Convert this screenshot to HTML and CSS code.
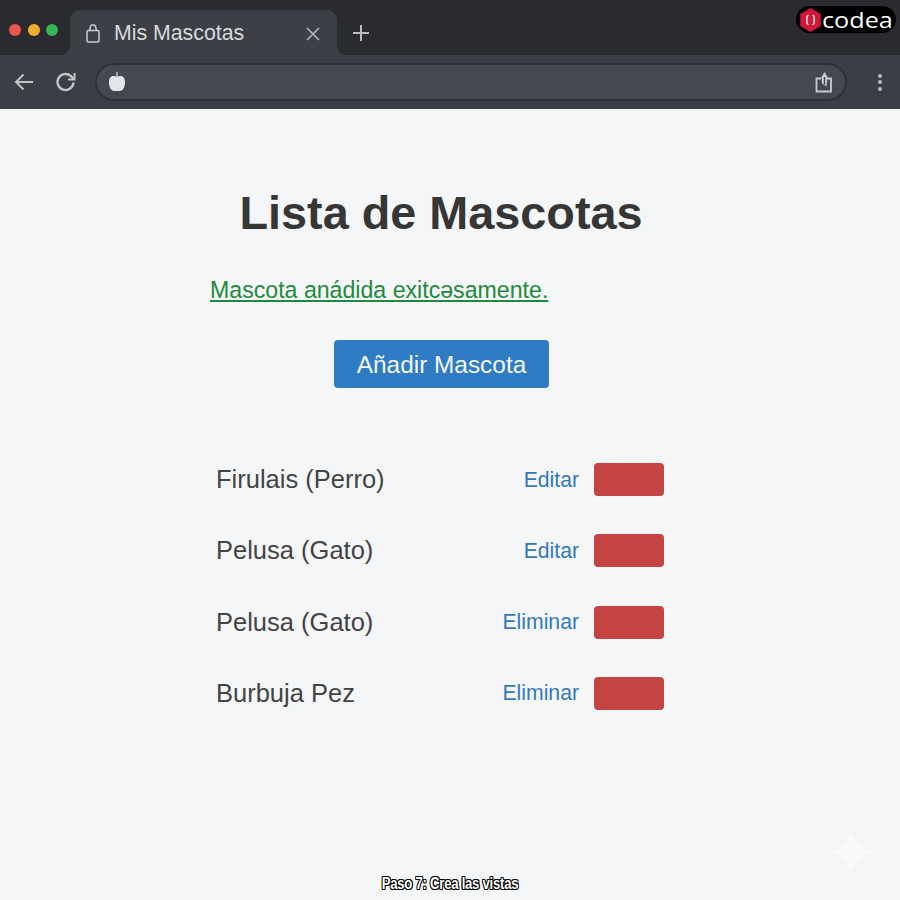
FILE: index.html
```html
<!DOCTYPE html>
<html lang="es">
<head>
  <meta charset="UTF-8">
  <title>Mis Mascotas</title>
  <link rel="stylesheet" href="styles.css">
</head>
<body>

<header class="browser">
  <div class="tab-strip">
    <div class="dots">
      <span class="dot dot-red"></span>
      <span class="dot dot-yellow"></span>
      <span class="dot dot-green"></span>
    </div>
    <div class="tab">
      <svg class="tab-lock" width="14" height="19" viewBox="0 0 14 19" fill="none" stroke="#c9cbce" stroke-width="1.5">
        <rect x="1" y="6.500" width="12" height="11.500" rx="1.500"/>
        <path d="M3.500 6.500L4.500 2.500Q4.800 1 6 1h2q1.200 0 1.500 1.500l1 4"/>
      </svg>
      <span class="tab-title">Mis Mascotas</span>
      <svg class="tab-close" width="14" height="14" viewBox="0 0 14 14" stroke="#b4b6ba" stroke-width="1.6">
        <path d="M1 1l12 12M13 1L1 13"/>
      </svg>
    </div>
    <svg class="new-tab" width="18" height="18" viewBox="0 0 18 18" stroke="#b9bbbe" stroke-width="2">
      <path d="M9 1v16M1 9h16"/>
    </svg>
  </div>
  <div class="toolbar">
    <svg class="nav-icon" width="20" height="20" viewBox="0 0 20 20" fill="none" stroke="#c4c6c9" stroke-width="1.9">
      <path d="M19 10H2M9.500 2.500L2 10l7.500 7.500"/>
    </svg>
    <svg class="nav-icon reload" width="22" height="22" viewBox="0 0 22 22" fill="none" stroke="#c4c6c9" stroke-width="2.300">
      <path d="M18.500 11.500a8 8 0 1 1-2.600-6.400L19 8"/>
      <path d="M19.500 2v6.500H13" stroke-width="2"/>
    </svg>
    <div class="address">
      <svg width="18" height="20" viewBox="0 0 18 20">
        <path d="M8 0h2v5H8z" fill="#9ea1a6"/>
        <path d="M5.500 4c1.500 0 2.200.5 3.500.5s2-.5 3.500-.5c3 0 4.500 2.500 4.500 6.500 0 5-2.500 8.500-5.500 8.500h-5C3.500 19 1 15.500 1 10.500 1 6.500 2.500 4 5.500 4z" fill="#e3e5e8"/>
      </svg>
      <svg class="share" width="20" height="22" viewBox="0 0 20 22" fill="none" stroke="#c9cbce" stroke-width="1.800">
        <path d="M7 7.500H2.500v13h14.500v-13h-4"/>
        <path d="M10.500 1l3 5-1 9.500-4.500-3-.5-6.500z" fill="#c9cbce" stroke="none"/>
        <path d="M10.500 6v7.500" stroke="#3d4047" stroke-width="1.300"/>
      </svg>
    </div>
    <div class="menu-dots">
      <span></span><span></span><span></span>
    </div>
  </div>
</header>

<main class="page">
  <h1>Lista de Mascotas</h1>
  <p class="flash">Mascota anádida exitcəsamente.</p>
  <a class="add-btn" href="#">Añadir Mascota</a>

  <ul class="pet-list">
    <li class="pet">
      <span class="pet-name">Firulais (Perro)</span>
      <a class="pet-link" href="#">Editar</a>
      <button class="del-btn" aria-label="Eliminar"></button>
    </li>
    <li class="pet">
      <span class="pet-name">Pelusa (Gato)</span>
      <a class="pet-link" href="#">Editar</a>
      <button class="del-btn" aria-label="Eliminar"></button>
    </li>
    <li class="pet">
      <span class="pet-name">Pelusa (Gato)</span>
      <a class="pet-link" href="#">Eliminar</a>
      <button class="del-btn" aria-label="Eliminar"></button>
    </li>
    <li class="pet">
      <span class="pet-name">Burbuja Pez</span>
      <a class="pet-link" href="#">Eliminar</a>
      <button class="del-btn" aria-label="Eliminar"></button>
    </li>
  </ul>
</main>

<div class="logo">
  <svg width="21" height="24" viewBox="0 0 21 24">
    <path d="M10.500 1L20 6.500v11L10.500 23 1 17.500v-11z" fill="#d3173a" stroke="#d3173a" stroke-width="1.500" stroke-linejoin="round"/>
    <path d="M8.500 7.500c-2 0-1.500 1.500-1.500 3s-1 1.500-1 1.500 1 0 1 1.500-.5 3 1.500 3M12.500 7.500c2 0 1.500 1.500 1.500 3s1 1.500 1 1.500-1 0-1 1.500.5 3-1.500 3" fill="none" stroke="#fff" stroke-width="1.300"/>
  </svg>
  <span class="logo-text">codea</span>
</div>

<svg class="sparkle" width="40" height="44" viewBox="0 0 40 44">
  <path d="M20 0C23 12 28 19 40 22 28 25 23 32 20 44 17 32 12 25 0 22 12 19 17 12 20 0z" fill="#f9fafb"/>
</svg>

<div class="caption">Paso 7: Crea las vistas</div>

</body>
</html>
```

FILE: styles.css
```css
* {
  box-sizing: border-box;
}
html, body {
  height: 100%;
}
body {
  margin: 0;
  position: relative;
  overflow: hidden;
  background: #f4f6f8;
  color: #333;
  font-family: "Liberation Sans", Arial, sans-serif;
}

/* browser chrome */
.browser {
  height: 109px;
}
.tab-strip {
  height: 55px;
  padding-top: 10px;
  display: flex;
  align-items: stretch;
  background: #2a2b2f;
}
.dots {
  width: 70px;
  padding: 14px 0 0 9px;
  display: flex;
  gap: 6.500px;
}
.dot {
  width: 12px;
  height: 12px;
  border-radius: 50%;
}
.dot-red { background: #ee5350; }
.dot-yellow { background: #eeb033; }
.dot-green { background: #34b653; }
.tab {
  position: relative;
  width: 267px;
  padding: 2px 16px 0;
  display: flex;
  align-items: center;
  background: #3c3f46;
  border-radius: 10px 10px 0 0;
}
.tab::before,
.tab::after {
  content: "";
  position: absolute;
  bottom: 0;
  width: 10px;
  height: 10px;
}
.tab::before {
  left: -10px;
  background: radial-gradient(circle at 0 0, transparent 10px, #3c3f46 10.500px);
}
.tab::after {
  right: -10px;
  background: radial-gradient(circle at 100% 0, transparent 10px, #3c3f46 10.500px);
}
.tab-title {
  margin-left: 14px;
  flex: 1;
  font-size: 21.300px;
  color: #d9dadc;
}
.tab-close {
  margin-right: 1px;
}
.new-tab {
  margin: 14px 0 0 15px;
}
.toolbar {
  height: 54px;
  padding: 0 18px 0 14px;
  display: flex;
  align-items: center;
  background: #3b3e45;
}
.nav-icon {
  flex: none;
}
.reload {
  margin-left: 21px;
}
.address {
  flex: 1;
  height: 38px;
  margin: 0 31px 0 18px;
  padding: 0 11px;
  display: flex;
  align-items: center;
  justify-content: space-between;
  background: #454850;
  border: 2px solid #2f3136;
  border-radius: 19px;
}
.menu-dots {
  display: flex;
  flex-direction: column;
  gap: 2.500px;
}
.menu-dots span {
  width: 4px;
  height: 4px;
  border-radius: 50%;
  background: #b9bbbe;
}

/* page */
.page {
  width: 462px;
  margin-left: 210px;
  padding-top: 78px;
  display: flex;
  flex-direction: column;
  align-items: center;
}
h1 {
  margin: 0;
  font-size: 46.800px;
  line-height: 52px;
  color: #363636;
}
.flash {
  align-self: flex-start;
  margin: 36px 0 0;
  font-size: 23.150px;
  line-height: 30px;
  color: #1f8a3c;
  text-decoration: underline;
  text-underline-offset: 2px;
}
.add-btn {
  margin-top: 35px;
  margin-left: 1px;
  width: 215px;
  height: 48px;
  padding-top: 2px;
  display: flex;
  align-items: center;
  justify-content: center;
  background: #2f7bc4;
  border-radius: 4px;
  color: #f4f8fc;
  font-size: 24.400px;
  text-decoration: none;
}
.pet-list {
  align-self: stretch;
  list-style: none;
  margin: 75px 0 0;
  padding: 0 8px 0 6px;
  display: flex;
  flex-direction: column;
  gap: 38.300px;
}
.pet {
  height: 33px;
  display: flex;
  align-items: center;
}
.pet-name {
  flex: 1;
  font-size: 25.500px;
  color: #444;
}
.pet-link {
  margin-right: 15px;
  font-size: 21.200px;
  color: #3578bd;
  text-decoration: none;
}
.del-btn {
  width: 70px;
  height: 33px;
  padding: 0;
  background: #c44444;
  border: 0;
  border-radius: 4px;
}

/* overlays on top of the recording */
.logo {
  position: absolute;
  top: 6px;
  left: 796px;
  width: 100px;
  height: 27px;
  padding-left: 4px;
  display: flex;
  align-items: center;
  gap: 1px;
  background: #000;
  border-radius: 14px;
}
.logo-text {
  padding-top: 1px;
  font-family: "Open Sans", sans-serif;
  font-size: 21px;
  line-height: 27px;
  color: #fff;
  transform: scaleX(1.2);
  transform-origin: left;
}
.sparkle {
  position: absolute;
  top: 830px;
  left: 831px;
}
.caption {
  position: absolute;
  top: 875px;
  left: 0;
  width: 900px;
  text-align: center;
  font-size: 16px;
  line-height: 18px;
  font-weight: bold;
  letter-spacing: -0.300px;
  color: #fff;
  transform: scaleX(0.82);
  text-shadow: 1px 0 0 #000, -1px 0 0 #000, 0 1px 0 #000, 0 -1px 0 #000, 1px 1px 0 #000, -1px -1px 0 #000, 1px -1px 0 #000, -1px 1px 0 #000;
}
```
